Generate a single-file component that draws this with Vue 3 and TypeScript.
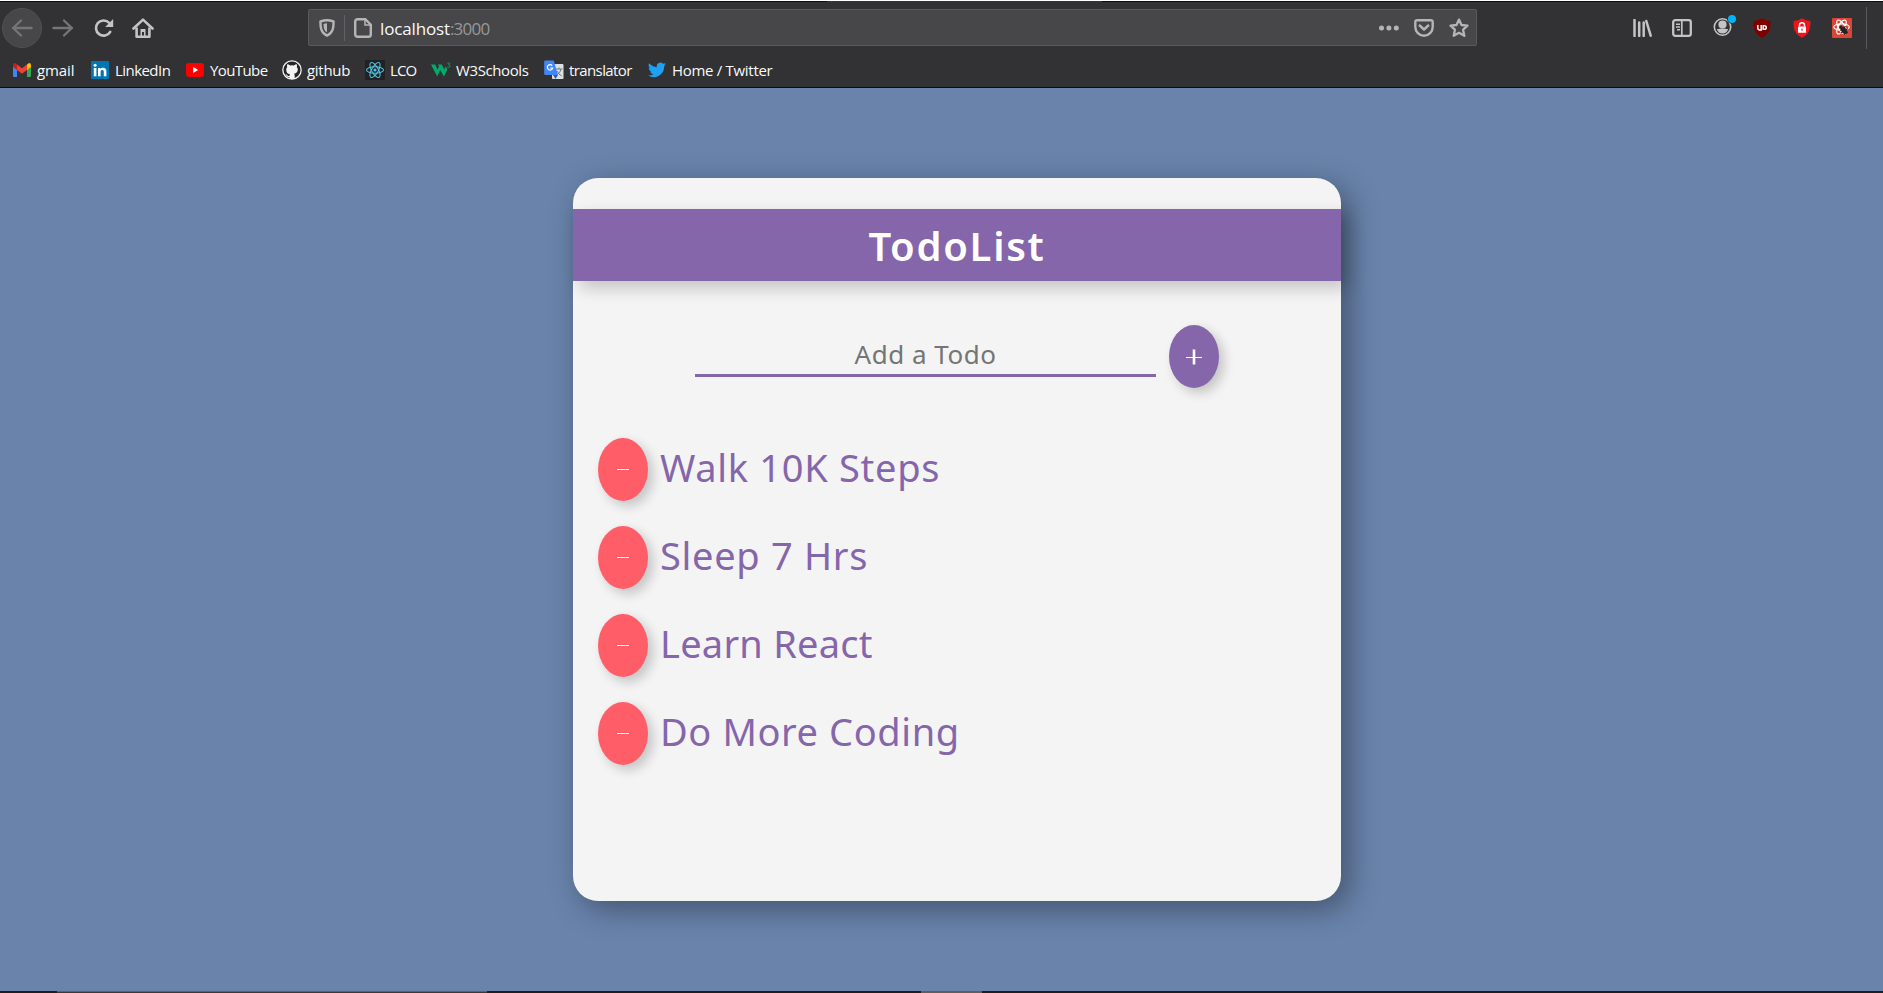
<script setup lang="ts">
import { ref } from 'vue'

interface Bookmark {
  icon: string
  label: string
  width: number
  spacing: number
}

interface Todo {
  text: string
  spacing: number
}

const bookmarks: Bookmark[] = [
  { icon: 'gmail', label: 'gmail', width: 78, spacing: -0.1 },
  { icon: 'linkedin', label: 'LinkedIn', width: 95, spacing: -0.55 },
  { icon: 'youtube', label: 'YouTube', width: 96, spacing: -0.6 },
  { icon: 'github', label: 'github', width: 83, spacing: -0.3 },
  { icon: 'react', label: 'LCO', width: 66, spacing: -0.9 },
  { icon: 'w3', label: 'W3Schools', width: 113, spacing: -0.4 },
  { icon: 'translate', label: 'translator', width: 104, spacing: -0.6 },
  { icon: 'twitter', label: 'Home / Twitter', width: 130, spacing: -0.3 },
]

const todos = ref<Todo[]>([
  { text: 'Walk 10K Steps', spacing: 0.7 },
  { text: 'Sleep 7 Hrs', spacing: 0.7 },
  { text: 'Learn React', spacing: 0.25 },
  { text: 'Do More Coding', spacing: 0.6 },
])

const draft = ref('')

function addTodo(): void {
  const text = draft.value.trim()
  if (!text) return
  todos.value.push({ text, spacing: 0.6 })
  draft.value = ''
}

function removeTodo(index: number): void {
  todos.value.splice(index, 1)
}
</script>

<template>
  <div class="window">
    <header class="chrome">
      <div class="tab-edge"><span class="tab-active"></span></div>
      <div class="toolbar">
        <div class="nav">
          <span class="back">
            <svg width="22" height="20" viewBox="0 0 22 20"><path d="M20.5 10H2M10 2.5 2.2 10l7.8 7.5" fill="none" stroke="#757577" stroke-width="2.4" stroke-linecap="round" stroke-linejoin="round" /></svg>
          </span>
          <svg class="forward" width="22" height="20" viewBox="0 0 22 20"><path d="M1.5 10H20M12 2.5l7.8 7.5-7.8 7.5" fill="none" stroke="#757577" stroke-width="2.4" stroke-linecap="round" stroke-linejoin="round" /></svg>
          <svg class="reload" width="20" height="20" viewBox="0 0 20 20"><path d="M16.2 13.8A7.6 7.6 0 1 1 15.3 5" fill="none" stroke="#c4c4c5" stroke-width="2.6" stroke-linecap="round" /><path d="M19.2 1v8h-8z" fill="#c4c4c5" /></svg>
          <svg class="home" width="22" height="20" viewBox="0 0 22 20"><path d="M1.500 10.500 11 1.600l9.500 8.900" fill="none" stroke="#c4c4c5" stroke-width="2.600" stroke-linecap="round" stroke-linejoin="round" /><path d="M4.600 9.500v9.200h12.800V9.500" fill="none" stroke="#c4c4c5" stroke-width="2.600" stroke-linejoin="round" /><path d="M8.500 18v-7h5v7h-1.500v-4h-2v4z" fill="#c4c4c5" /></svg>
        </div>

        <div class="address">
          <svg class="shield" width="16" height="18" viewBox="0 0 16 18"><path d="M8 1.300c2.500 0 4.500.5 6.600 1.200 0 6.300-.6 11.500-6.600 14.200C2 14 1.400 8.800 1.400 2.500 3.500 1.800 5.500 1.300 8 1.300z" fill="none" stroke="#b5b5b6" stroke-width="2.400" stroke-linejoin="round" /><path d="M8 4.300v9C5 11.600 4.600 8.500 4.500 4.900 5.600 4.500 6.900 4.300 8 4.300z" fill="#b5b5b6" /></svg>
          <span class="divider"></span>
          <svg class="page" width="18" height="20" viewBox="0 0 18 20"><path d="M3.500 1.200h7.800l5.500 5.500v9.800a2.300 2.300 0 0 1-2.300 2.300h-11a2.300 2.300 0 0 1-2.300-2.300v-13a2.300 2.300 0 0 1 2.300-2.300z" fill="none" stroke="#b5b5b6" stroke-width="2.400" /><path d="M11 1.500v5.500h5.500" fill="none" stroke="#b5b5b6" stroke-width="1.500" /></svg>
          <span class="url">localhost<span class="port">:3000</span></span>
          <svg class="dots" width="20" height="6" viewBox="0 0 20 6"><g fill="#b5b5b6"><circle cx="2.500" cy="3" r="2.500" /><circle cx="9.900" cy="3" r="2.500" /><circle cx="17.300" cy="3" r="2.500" /></g></svg>
          <svg class="pocket" width="20" height="18" viewBox="0 0 20 18"><path d="M3 1.200h14a1.700 1.700 0 0 1 1.700 1.700V8A8.700 8.700 0 0 1 1.300 8V2.900A1.700 1.700 0 0 1 3 1.200z" fill="none" stroke="#b5b5b6" stroke-width="2.400" /><path d="m5.700 6.500 4.300 4 4.300-4" fill="none" stroke="#b5b5b6" stroke-width="2.400" stroke-linecap="round" stroke-linejoin="round" /></svg>
          <svg class="star" width="20" height="20" viewBox="0 0 20 20"><path d="m10 1.600 2.500 5.400 6 .7-4.400 4 1.200 6.100-5.300-3-5.300 3 1.200-6.100-4.400-4 6-.7z" fill="none" stroke="#b5b5b6" stroke-width="2.300" stroke-linejoin="round" /></svg>
        </div>

        <div class="tools">
          <svg class="library" width="19" height="18" viewBox="0 0 19 18"><path d="M1.500 1v16M6.200 3.500V17M10.700 3.500V17M13.300 2l4.400 14.600" fill="none" stroke="#c4c4c5" stroke-width="2.500" stroke-linecap="round" /></svg>
          <svg class="sidebar" width="20" height="18" viewBox="0 0 20 18"><rect x="1.200" y="1.200" width="17.600" height="15.600" rx="2" fill="none" stroke="#c4c4c5" stroke-width="2.300" /><path d="M9.800 2v14" stroke="#c4c4c5" stroke-width="1.700" /><path d="M4 5.200h4M4 8h4M5 10.800h3" stroke="#c4c4c5" stroke-width="1.400" /></svg>
          <svg class="account" width="24" height="24" viewBox="0 0 24 24"><circle cx="9.500" cy="14" r="8.200" fill="none" stroke="#c4c4c5" stroke-width="1.600" /><circle cx="9.500" cy="11.500" r="4.100" fill="#c4c4c5" /><path d="M3.800 16.300q5.700-1.500 11.400 0-1.500 4.200-5.700 4.200t-5.700-4.200z" fill="#c4c4c5" /><circle cx="19" cy="6" r="5" fill="#323234" /><circle cx="19" cy="6" r="4" fill="#00b3f4" /></svg>
          <svg class="ublock" width="18" height="20" viewBox="0 0 18 20"><path d="M9 .3q4 2.500 8.500 2.600c0 7.800-.7 12.500-8.500 16.800C1.200 15.400.5 10.700.5 2.900Q5 2.800 9 .3z" fill="#800000" /><path d="M4.800 7v3.200q0 1.700 1.700 1.700h1.700V7M10.200 7.700h1.300a1.800 1.800 0 0 1 0 3.600h-1.300z" fill="none" stroke="#fff" stroke-width="1.500" /></svg>
          <svg class="lock" width="18" height="20" viewBox="0 0 18 20"><path d="M9 .3q4 2.500 8.500 2.600c0 7.800-.7 12.500-8.500 16.800C1.200 15.400.5 10.700.5 2.900Q5 2.800 9 .3z" fill="#f01418" /><rect x="5" y="8.500" width="8" height="6.300" rx=".6" fill="#fff" /><path d="M6.500 8.500V7.200a2.500 2.500 0 0 1 5 0v1.300" fill="none" stroke="#fff" stroke-width="1.400" /><path d="M9 10.700v2" stroke="#f01418" stroke-width="1.200" /></svg>
          <svg class="devtools" width="20" height="20" viewBox="0 0 20 20"><rect width="20" height="20" rx="1" fill="#db4437" /><g fill="none" stroke="#fff" stroke-width="1.200"><ellipse cx="9.500" cy="9" rx="7.800" ry="3.200" /><ellipse cx="9.500" cy="9" rx="7.800" ry="3.200" transform="rotate(60 9.500 9)" /><ellipse cx="9.500" cy="9" rx="7.800" ry="3.200" transform="rotate(120 9.500 9)" /></g><g fill="#242424"><ellipse cx="12" cy="12.500" rx="2.600" ry="3.800" transform="rotate(-40 12 12.500)" /><circle cx="9" cy="9.200" r="1.600" /></g><path d="m8 12.500 6-4M8.500 15l7.500-4.500M11.500 17l4.500-3M12 8l2.500 8" stroke="#242424" stroke-width="1" /></svg>
          <span class="tools-edge"></span>
        </div>
      </div>

      <nav class="bookmarks">
        <a v-for="mark in bookmarks" :key="mark.label" class="bookmark" :style="{ width: `${mark.width}px` }">
          <svg v-if="mark.icon === 'gmail'" width="18" height="14" viewBox="0 0 18 14"><path d="M0 2v10.800Q0 14 1.200 14H4V5z" fill="#4285f4" /><path d="M18 2v10.800q0 1.200-1.200 1.200H14V5z" fill="#34a853" /><path d="M14 1.500V7l4-3V2q0-2-2-2z" fill="#fbbc04" /><path d="M4 1.500V7L0 4V2q0-2 2-2z" fill="#c5221f" /><path d="M4 1.500 9 5.300l5-3.800V7l-5 3.800L4 7z" fill="#ea4335" /></svg>
          <svg v-else-if="mark.icon === 'linkedin'" width="18" height="18" viewBox="0 0 18 18"><rect width="18" height="18" rx="1" fill="#0077b5" /><path d="M2.800 7h2.600v8.200H2.800zM7 7h2.500v1.200c1.300-2.200 5.900-2 5.900 2.200v4.800h-2.600v-4.400c0-2.300-3.200-2.200-3.200 0v4.400H7z" fill="#fff" /><circle cx="4.100" cy="4.200" r="1.500" fill="#fff" /></svg>
          <svg v-else-if="mark.icon === 'youtube'" width="18" height="14" viewBox="0 0 18 14"><rect width="18" height="14" rx="3" fill="#f00" /><path d="m7.200 4 5 3-5 3z" fill="#fff" /></svg>
          <svg v-else-if="mark.icon === 'github'" class="wide" width="20" height="20" viewBox="0 0 20 20"><circle cx="10" cy="10" r="9.800" fill="#f4f4f4" /><circle cx="10" cy="10" r="8.500" fill="#252527" /><path d="M5.200 4.300q1.600 0 2.900 1.100 1.900-.5 3.800 0 1.300-1.100 2.900-1.100.5 1.300 0 2.600 1 1.200 1 2.700 0 3.600-3.800 4.100.7.700.7 1.900v3.500H7.400v-2.200q-2.200.4-2.900-1.200l-1-1.300q1.300-.2 2 1.100.8.900 1.900.4.100-.8.700-1.400-3.900-.6-3.900-4.900 0-1.500 1-2.700-.5-1.300 0-2.600z" fill="#f4f4f4" /></svg>
          <svg v-else-if="mark.icon === 'react'" class="wide" width="20" height="20" viewBox="0 0 20 20"><rect width="20" height="20" rx="1" fill="#202124" /><g fill="none" stroke="#53c1de" stroke-width="1.100"><ellipse cx="10" cy="10" rx="8.500" ry="3.300" /><ellipse cx="10" cy="10" rx="8.500" ry="3.300" transform="rotate(60 10 10)" /><ellipse cx="10" cy="10" rx="8.500" ry="3.300" transform="rotate(120 10 10)" /></g><circle cx="10" cy="10" r="1.600" fill="#53c1de" /></svg>
          <svg v-else-if="mark.icon === 'w3'" class="wide" width="20" height="20" viewBox="0 0 20 20"><path d="M0 4.500h4.200l2.300 5L8 6.500l-.9-2h3.700l2.400 5L14.500 6.500l2 3-3.600 7L9.200 10 6.200 16.500z" fill="#04aa6d" /><path d="M16.300 3.200h2.600l-1.400 1.800q2 .2 1.500 1.700-.8 1.200-2.800.4" fill="none" stroke="#04aa6d" stroke-width=".8" /></svg>
          <svg v-else-if="mark.icon === 'translate'" class="wide" width="20" height="20" viewBox="0 0 20 20"><rect x="8" y="4" width="11.500" height="15" rx="1" fill="#e0e0e0" /><path d="M11.500 9h7M15 7.500V9M17.200 9q-1 4-4.500 6M13 11q1.500 3.500 4.700 5" fill="none" stroke="#607d8b" stroke-width="1" /><path d="M1.500.5h8.200L14 15H1.500Q.2 15 .2 13.700V1.800Q.2.500 1.500.5z" fill="#4285f4" /><path d="M9 15h5l-2.500 4z" fill="#3359bd" /><path d="M8.200 5.700A2.700 2.700 0 1 0 8.700 8H6.200" fill="none" stroke="#fff" stroke-width="1.200" /></svg>
          <svg v-else width="18" height="16" viewBox="0 0 24 20"><path d="M24 2.400a10 10 0 0 1-2.800.8A4.900 4.900 0 0 0 23.300.5a10 10 0 0 1-3.100 1.200 4.900 4.900 0 0 0-8.400 4.500A14 14 0 0 1 1.700 1a4.900 4.900 0 0 0 1.500 6.600A4.900 4.900 0 0 1 1 7a4.900 4.900 0 0 0 3.900 4.900 5 5 0 0 1-2.200.1 4.900 4.900 0 0 0 4.600 3.400A9.900 9.900 0 0 1 0 17.400a14 14 0 0 0 21.500-12.400A10 10 0 0 0 24 2.400z" fill="#1da1f2" /></svg>
          <span class="bookmark-label" :style="{ letterSpacing: `${mark.spacing}px` }">{{ mark.label }}</span>
        </a>
      </nav>
    </header>

    <main class="content">
      <section class="card">
        <h1 class="title">TodoList</h1>
        <form class="entry" @submit.prevent="addTodo">
          <input v-model="draft" class="field" type="text" placeholder="Add a Todo" />
          <button class="round add" type="submit" aria-label="Add">
            <svg width="16" height="16" viewBox="0 0 16 16"><path d="M0 8.500h16" stroke="#fff" stroke-width="1" /><path d="M8 .5v15" stroke="#fff" stroke-width="2.600" /></svg>
          </button>
        </form>
        <ul class="list">
          <li v-for="(todo, index) in todos" :key="index" class="item">
            <button class="round remove" type="button" aria-label="Remove" @click="removeTodo(index)"><span class="minus"></span></button>
            <span class="item-text" :style="{ letterSpacing: `${todo.spacing}px` }">{{ todo.text }}</span>
          </li>
        </ul>
      </section>
    </main>

    <footer class="taskbar"><span class="task"></span><span class="task-active"></span></footer>
  </div>
</template>

<style>
body {
  overflow: hidden;
}
</style>

<style scoped>
.window {
  display: flex;
  flex-direction: column;
  width: 1883px;
  height: 993px;
  overflow: hidden;
  background: #6983ab;
}

.window * {
  box-sizing: border-box;
}

svg {
  display: block;
  flex: none;
}

.chrome {
  height: 88px;
  background: #323234;
  border-bottom: 1px solid #0c0c0d;
  font-family: "Open Sans", "Noto Sans", sans-serif;
  color: #f9f9fa;
}

.tab-edge {
  display: flex;
  height: 2px;
  padding-top: 1px;
  background: linear-gradient(#fff 1px, #0c0c0d 1px);
}

.tab-active {
  width: 275px;
  height: 1px;
  margin-left: 827px;
  background: #323234;
}

.toolbar {
  display: flex;
  align-items: center;
  height: 51px;
}

.nav {
  display: flex;
  align-items: center;
  width: 308px;
  padding-left: 2px;
}

.back {
  display: flex;
  align-items: center;
  justify-content: center;
  width: 40px;
  height: 40px;
  border-radius: 50%;
  background: #474749;
  border: 1px solid #505052;
}

.forward {
  margin-left: 10px;
}

.reload {
  margin-left: 20px;
}

.home {
  margin-left: 18px;
}

.address {
  display: flex;
  align-items: center;
  width: 1169px;
  height: 37px;
  padding-left: 10px;
  border: 1px solid #5a5a5c;
  border-radius: 2px;
  background: #474749;
}

.divider {
  width: 1px;
  height: 26px;
  margin: 0 9px;
  background: #626266;
}

.url {
  flex: 1;
  margin-left: 8px;
  padding-top: 2px;
  font-size: 17px;
  letter-spacing: -0.15px;
}

.port {
  color: #98989a;
  letter-spacing: -0.75px;
}

.pocket {
  margin-left: 15px;
}

.star {
  margin: 0 7px 0 15px;
}

.tools {
  display: flex;
  align-items: center;
  margin-left: 156px;
}

.sidebar {
  margin-left: 20px;
}

.account {
  margin: -5px 0 0 21px;
}

.ublock {
  margin-left: 16px;
}

.lock {
  margin-left: 22px;
}

.devtools {
  margin-left: 21px;
}

.tools-edge {
  width: 1px;
  height: 42px;
  margin-left: 14px;
  background: #5a5a5c;
}

.bookmarks {
  display: flex;
  align-items: center;
  height: 34px;
  padding-left: 13px;
}

.bookmark {
  display: flex;
  align-items: center;
}

.bookmark .wide {
  margin-right: -1px;
}

.bookmark-label {
  margin-left: 6px;
  font-size: 15px;
  line-height: 20px;
  white-space: nowrap;
}

.content {
  flex: 1;
  padding: 90px 0 0 573px;
  font-family: "Noto Sans", "Open Sans", sans-serif;
}

.card {
  width: 768px;
  height: 723px;
  padding-top: 31px;
  border-radius: 25px;
  background: #f4f4f4;
  box-shadow: 8px 8px 30px rgba(0, 0, 0, 0.36);
}

.title {
  height: 72px;
  margin: 0;
  background: #8566aa;
  box-shadow: 7px 7px 16px rgba(0, 0, 0, 0.2);
  color: #fff;
  font-size: 40px;
  font-weight: 560;
  line-height: 74px;
  text-align: center;
  letter-spacing: 1.7px;
}

.entry {
  display: flex;
  align-items: flex-start;
  margin: 44px 0 0 122px;
}

.field {
  width: 461px;
  height: 52px;
  padding: 9px 0 0;
  border: 0;
  border-bottom: 3px solid #8566aa;
  outline: 0;
  background: transparent;
  color: #8566aa;
  font-family: inherit;
  font-size: 26px;
  letter-spacing: 0.5px;
  text-align: center;
}

.field::placeholder {
  color: #757575;
}

.round {
  display: flex;
  flex: none;
  align-items: center;
  justify-content: center;
  width: 50px;
  height: 63px;
  padding: 0;
  border: 0;
  border-radius: 50%;
  box-shadow: 5px 5px 12px rgba(0, 0, 0, 0.2);
}

.add {
  margin-left: 13px;
  background: #8566aa;
}

.remove {
  background: #ff5e69;
}

.minus {
  width: 12px;
  height: 1px;
  background: #fff;
}

.list {
  display: flex;
  flex-direction: column;
  gap: 25px;
  margin: 50px 0 0;
  padding: 0 0 0 25px;
  list-style: none;
}

.item {
  display: flex;
  align-items: center;
  height: 63px;
}

.item-text {
  margin: -5px 0 0 12px;
  color: #8566aa;
  font-size: 38px;
  font-weight: 450;
  line-height: 60px;
  white-space: nowrap;
}
.taskbar {
  display: flex;
  height: 2px;
  background: #221c1b;
}

.task {
  width: 430px;
  margin-left: 57px;
  background: #3d3736;
  border-top: 1px solid #655f5e;
}

.task-active {
  width: 61px;
  margin-left: 434px;
  background: #645e5b;
}
</style>
